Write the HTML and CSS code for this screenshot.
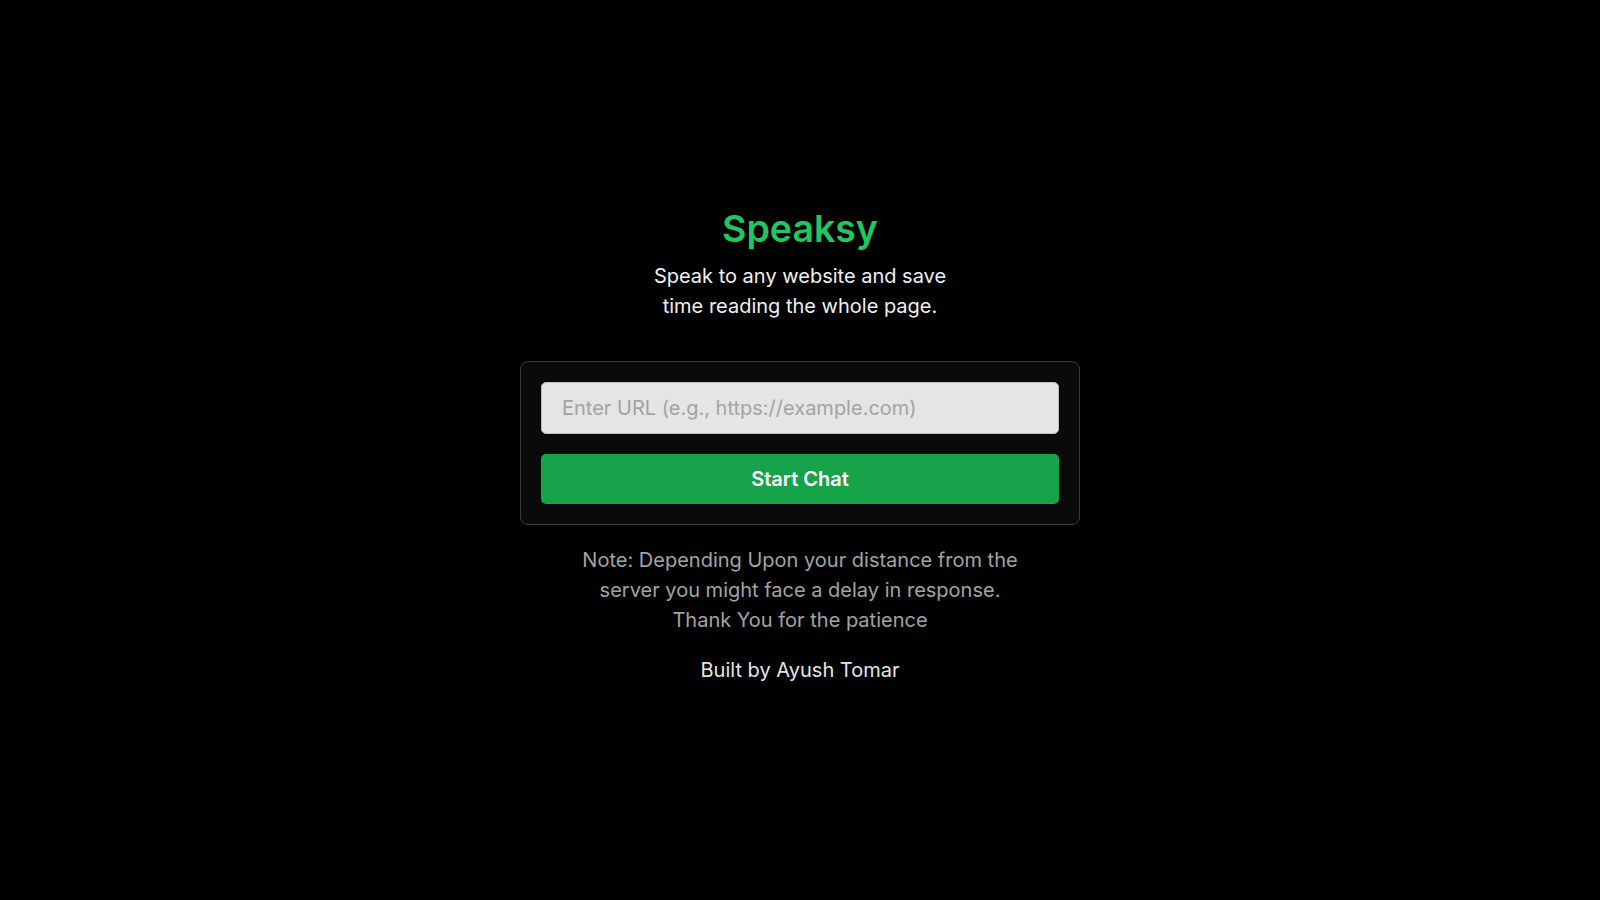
FILE: index.html
```html
<!DOCTYPE html>
<html lang="en">
<head>
<meta charset="utf-8">
<title>Speaksy</title>
<link rel="stylesheet" href="styles.css">
</head>
<body>
<main class="page">
  <div class="wrap">
    <h1 class="title">Speaksy</h1>
    <p class="subtitle">Speak to any website and save time reading the whole page.</p>
    <form class="card" onsubmit="return false;">
      <input class="url" type="text" placeholder="Enter URL (e.g., https://example.com)">
      <button class="start" type="submit">Start Chat</button>
    </form>
    <p class="note">Note: Depending Upon your distance from the server you might face a delay in response. Thank You for the patience</p>
    <p class="credit">Built by Ayush Tomar</p>
  </div>
</main>
</body>
</html>
```
FILE: styles.css
```css
* { box-sizing: border-box; }
html, body { margin: 0; padding: 0; background: #000; }
body { font-family: Inter, "Noto Sans", sans-serif; color: #e5e5e5; }
.page {
  min-height: 100vh;
  padding-bottom: 7px;
  display: flex;
  align-items: center;
  justify-content: center;
}
.wrap {
  display: flex;
  flex-direction: column;
  align-items: center;
  text-align: center;
  width: 560px;
}
.title {
  margin: 0;
  font-size: 37.5px;
  line-height: 40px;
  font-weight: 600;
  color: #22c55e;
}
.subtitle {
  margin: 12px 0 0;
  max-width: 300px;
  font-size: 20px;
  line-height: 30px;
  color: #f0f0f0;
}
.card {
  margin-top: 40px;
  width: 560px;
  padding: 20px;
  background: #0a0a0a;
  border: 1px solid #3a3a3a;
  border-radius: 8px;
  display: flex;
  flex-direction: column;
  gap: 20px;
}
.url {
  height: 52px;
  padding: 0 20px;
  border: 1px solid #bdbdbd;
  border-radius: 5px;
  background: #e5e5e5;
  font-family: inherit;
  font-size: 20px;
  color: #222;
  outline: none;
}
.url::placeholder { color: #a3a3a3; }
.start {
  height: 50px;
  border: 0;
  border-radius: 5px;
  background: #16a34a;
  color: #fff;
  font-family: inherit;
  font-size: 20px;
  font-weight: 600;
  cursor: pointer;
}
.note {
  margin: 20px 0 0;
  max-width: 440px;
  font-size: 20px;
  line-height: 30px;
  color: #a3a3a3;
}
.credit {
  margin: 20px 0 0;
  font-size: 20px;
  line-height: 30px;
  color: #e5e5e5;
}
```
